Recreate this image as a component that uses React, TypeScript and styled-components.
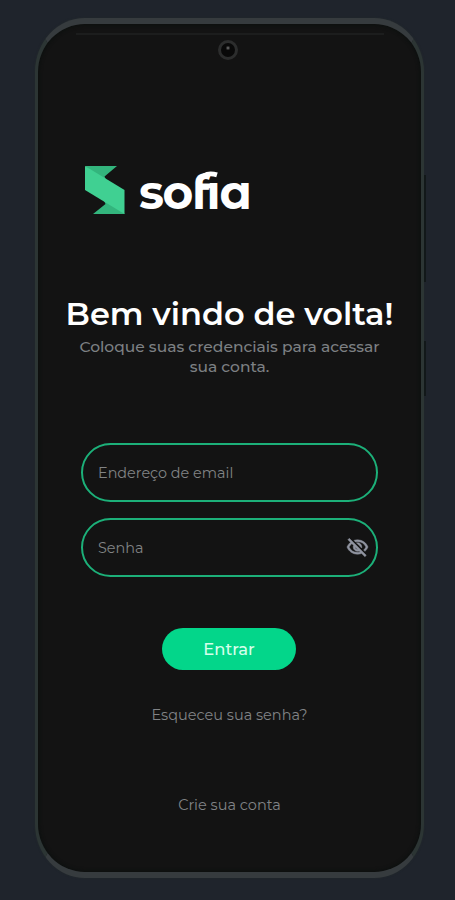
import React from "react";
import styled, { createGlobalStyle } from "styled-components";
import { MdOutlineVisibilityOff } from "react-icons/md";

const GlobalStyle = createGlobalStyle`
  * { box-sizing: border-box; }
  body {
    margin: 0;
    background: #1f242c;
    font-family: Montserrat, Inter, "Open Sans", sans-serif;
  }
`;

const Stage = styled.main`
  height: 900px;
  padding: 18px 0 0 35px;
  overflow: hidden;
`;

const Phone = styled.div`
  position: relative;
  width: 389px;
  height: 860px;
  border: solid;
  border-color: #363b3e #2c3534;
  border-width: 6px 3px;
  border-radius: 50px / 54px;
  background: #131313;
  box-shadow: inset 0 0 3px 2px #0e1110, 0 0 2px #252c2d;
`;

const Speaker = styled.div`
  position: absolute;
  top: 9px;
  left: 38px;
  width: 308px;
  height: 2px;
  background: #1c1d1d;
`;

const Camera = styled.div`
  position: absolute;
  top: 16px;
  left: 180px;
  width: 20px;
  height: 20px;
  border: 3px solid #2c2d2d;
  border-radius: 50%;
  background: radial-gradient(circle at 7px 5px, #8b8b8b 0, #444 1px, #090909 2.5px);
`;

const SideKey = styled.div<{ $top: number; $height: number }>`
  position: absolute;
  left: 386px;
  top: ${(p) => p.$top}px;
  width: 2px;
  height: ${(p) => p.$height}px;
  background: #121819;
`;

const Screen = styled.div`
  display: flex;
  flex-direction: column;
  padding: 142px 43px 0;
`;

const Brand = styled.div`
  display: flex;
  align-items: center;
  gap: 13px;
  height: 48px;
  margin-left: 4px;
`;

const WordmarkSvg = styled.svg`
  overflow: visible;
  text {
    fill: #fff;
    font: 700 47px Montserrat, Inter, sans-serif;
    font-feature-settings: "ss01";
  }
  path {
    fill: none;
    stroke: #fff;
    stroke-width: 4.8px;
  }
`;

const Title = styled.h1`
  margin: 80px -43px 0;
  color: #fff;
  font-size: 32px;
  font-weight: 600;
  line-height: 40px;
  text-align: center;
  white-space: nowrap;
`;

const Subtitle = styled.p`
  margin: 3px -10px 0;
  color: #7d8083;
  font-size: 15.5px;
  font-weight: 500;
  line-height: 20px;
  text-align: center;
`;

const Form = styled.form`
  display: flex;
  flex-direction: column;
  gap: 16px;
  margin-top: 66px;
`;

const Field = styled.label`
  display: flex;
  align-items: center;
  height: 59px;
  padding: 1px 7px 0 15px;
  border: 2px solid #1cb079;
  border-radius: 30px;
  color: #9094a0;
`;

const HiddenIcon = styled(MdOutlineVisibilityOff)`
  margin-top: -1px;
  path:not([fill="none"]) {
    stroke: currentColor;
    stroke-width: 0.5px;
  }
`;

const Input = styled.input`
  flex: 1;
  min-width: 0;
  padding: 0;
  border: 0;
  outline: 0;
  background: transparent;
  color: #fff;
  font: inherit;
  font-size: 14.4px;
  &::placeholder { color: #818385; opacity: 1; }
`;

const Submit = styled.button`
  align-self: center;
  width: 134px;
  height: 42px;
  margin: 35px 1px 0 0;
  padding: 0;
  border: 0;
  border-radius: 21px;
  background: #03d68a;
  color: #d5ffeb;
  font: inherit;
  font-size: 16.4px;
  font-weight: 500;
`;

const TextLink = styled.a<{ $gap: number }>`
  align-self: center;
  margin-top: ${(p) => p.$gap}px;
  color: #818386;
  font-size: 14.5px;
  line-height: 20px;
`;

function LogoMark() {
  return (
    <svg width="41" height="48" viewBox="0 0 41 48" aria-hidden="true">
      <path d="M0 0H32L19.5 10.5L24 20Z" fill="#33b57d" />
      <path d="M40 48H8L20.5 38L16 28Z" fill="#33b57d" />
      <path d="M0 0L39.5 24V48L0 24Z" fill="#40d092" />
    </svg>
  );
}

function Wordmark() {
  return (
    <WordmarkSvg width="113" height="48" viewBox="0 0 113 48">
      <text y="43" x="0 23.5 53 67.5 80.5">sofıa</text>
      <path d="M65 9.8Q70 6.4 78 8.9M60 19.8H72" />
    </WordmarkSvg>
  );
}

export default function App() {
  return (
    <>
      <GlobalStyle />
      <Stage>
        <Phone>
          <Speaker />
          <Camera />
          <SideKey $top={151} $height={107} />
          <SideKey $top={317} $height={55} />
          <Screen>
            <Brand>
              <LogoMark />
              <Wordmark />
            </Brand>
            <Title>Bem vindo de volta!</Title>
            <Subtitle>
              Coloque suas credenciais para acessar
              <br />
              sua conta.
            </Subtitle>
            <Form onSubmit={(e) => e.preventDefault()}>
              <Field>
                <Input type="email" placeholder="Endereço de email" />
              </Field>
              <Field>
                <Input type="password" placeholder="Senha" />
                <HiddenIcon size={23} />
              </Field>
              <Submit type="submit">Entrar</Submit>
            </Form>
            <TextLink $gap={35}>Esqueceu sua senha?</TextLink>
            <TextLink $gap={70}>Crie sua conta</TextLink>
          </Screen>
        </Phone>
      </Stage>
    </>
  );
}
